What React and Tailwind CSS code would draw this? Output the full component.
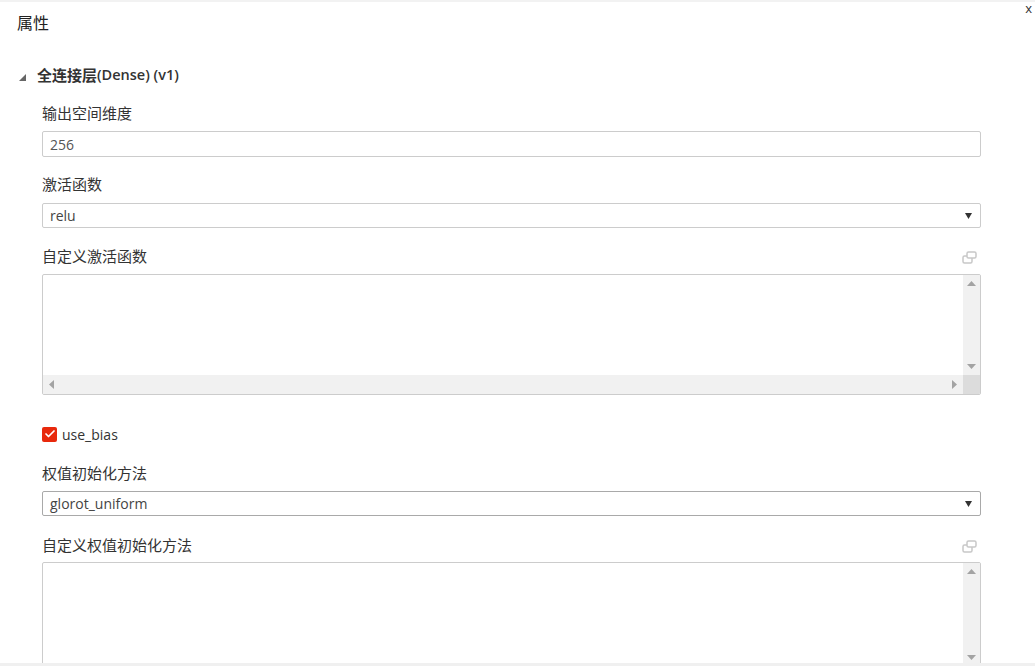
import { Check } from "lucide-react";

const font = { fontFamily: '"Open Sans", "Noto Sans CJK SC", sans-serif' };

const Tri = ({ dir }) => {
  const pts = {
    up: "0,5 9,5 4.5,0",
    down: "0,0 9,0 4.5,5",
    left: "5,0 5,9 0,4.5",
    right: "0,0 0,9 5,4.5",
  }[dir];
  const vertical = dir === "up" || dir === "down";
  return (
    <svg width={vertical ? 9 : 5} height={vertical ? 5 : 9} viewBox={vertical ? "0 0 9 5" : "0 0 5 9"}>
      <polygon points={pts} fill="#a3a3a3" />
    </svg>
  );
};

const PopoutIcon = () => (
  <svg width="15" height="13" viewBox="0 0 15 13" fill="none" stroke="#c8c8c8" strokeWidth="1.5">
    <rect x="5" y="1" width="9" height="6" rx="1.5" />
    <path d="M5 5 H2.5 a1.5 1.5 0 0 0 -1.5 1.5 V10.5 a1.5 1.5 0 0 0 1.5 1.5 H8.5 a1.5 1.5 0 0 0 1.5 -1.5 V7" />
  </svg>
);

const Label = ({ children, icon, className = "" }) => (
  <div className={`flex items-center justify-between h-5 text-[15px] leading-5 text-[#333] ${className}`}>
    <span>{children}</span>
    {icon && (
      <span className="mr-[4px] mt-[2px]">
        <PopoutIcon />
      </span>
    )}
  </div>
);

const Select = ({ value, className = "", dark }) => (
  <div
    className={`h-[25px] border ${dark ? "border-[#a9a9a9]" : "border-[#ccc]"} rounded-[2px] flex items-center justify-between pl-[7px] pr-[8px] text-[14px] text-[#444] ${className}`}
  >
    <span>{value}</span>
    <svg width="7" height="6" viewBox="0 0 7 6">
      <polygon points="0,0 7,0 3.5,6" fill="#333" />
    </svg>
  </div>
);

const TextArea = ({ className = "", hScroll }) => (
  <div className={`border border-[#ccc] rounded-[2px] flex flex-col overflow-hidden ${className}`}>
    <div className="flex flex-1 min-h-0">
      <div className="flex-1" />
      <div className="w-[17px] bg-[#f1f1f1] flex flex-col items-center justify-between py-[6px]">
        <Tri dir="up" />
        <Tri dir="down" />
      </div>
    </div>
    {hScroll && (
      <div className="h-[19px] flex bg-[#f1f1f1]">
        <div className="flex-1 flex items-center justify-between px-[6px]">
          <Tri dir="left" />
          <Tri dir="right" />
        </div>
        <div className="w-[17px] bg-[#dcdcdc]" />
      </div>
    )}
  </div>
);

export default function App() {
  return (
    <div className="w-[1035px] h-[666px] overflow-hidden bg-white relative border-t-2 border-[#f2f2f2]" style={font}>
      <div className="absolute right-[3px] top-[0px] text-[13px] leading-none text-[#333]">x</div>

      <div className="pt-[10px] pl-[17px] text-[16px] leading-[22px] text-[#222]">属性</div>

      <div className="mt-[31px] flex items-center h-5 pl-[19px]">
        <svg width="7" height="7" viewBox="0 0 7 7" className="mt-[5px]">
          <polygon points="7,0 7,7 0,7" fill="#666" />
        </svg>
        <span className="ml-[11px] text-[15px] font-bold text-[#333]">全连接层</span>
        <span className="text-[14.5px] font-semibold text-[#333]">(Dense) (v1)</span>
      </div>

      <div className="pl-[42px] pr-[54px]">
        <Label className="mt-[18px]">输出空间维度</Label>
        <div className="mt-[8px] h-[26px] border border-[#ccc] rounded-[2px] flex items-center pl-[7px] text-[14px] text-[#555]">
          256
        </div>

        <Label className="mt-[17px]">激活函数</Label>
        <Select className="mt-[9px]" value="relu" />

        <Label className="mt-[18px]" icon>
          自定义激活函数
        </Label>
        <TextArea className="mt-[8px] h-[121px]" hScroll />

        <div className="mt-[29px] h-5 flex items-center">
          <div className="w-[15px] h-[15px] rounded-[2px] bg-[#e8290c] flex items-center justify-center">
            <Check size={12} strokeWidth={3.5} color="#fff" />
          </div>
          <span className="ml-[5px] text-[14px] text-[#333]">use_bias</span>
        </div>

        <Label className="mt-[19px]">权值初始化方法</Label>
        <Select className="mt-[8px]" value="glorot_uniform" dark />

        <Label className="mt-[19px]" icon>
          自定义权值初始化方法
        </Label>
        <TextArea className="mt-[7px] h-[105px]" />
      </div>

      <div className="absolute left-0 right-0 bottom-0 h-[3px] bg-[#f0f0f0]" />
    </div>
  );
}
